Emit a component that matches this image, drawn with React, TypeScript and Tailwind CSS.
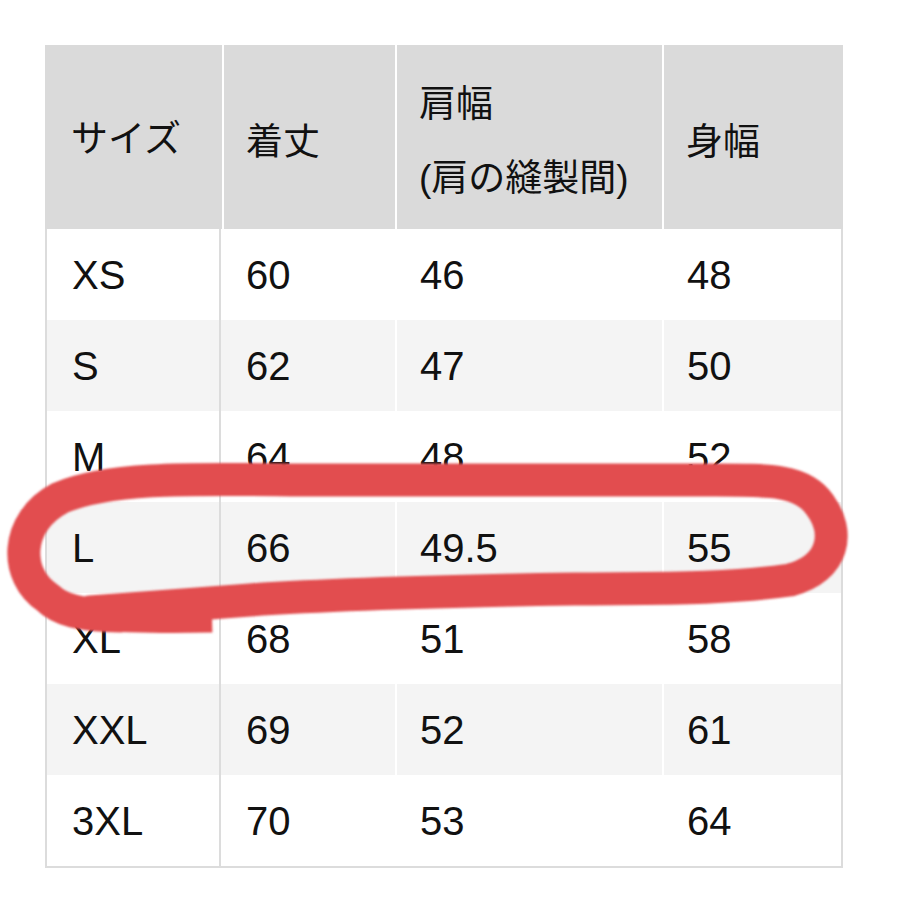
const rows = [
  ['XS', '60', '46', '48'],
  ['S', '62', '47', '50'],
  ['M', '64', '48', '52'],
  ['L', '66', '49.5', '55'],
  ['XL', '68', '51', '58'],
  ['XXL', '69', '52', '61'],
  ['3XL', '70', '53', '64'],
];

const font = { fontFamily: '"Liberation Sans", "Noto Sans CJK JP", Arial, sans-serif' };

export default function App() {
  return (
    <div className="relative w-[900px] h-[900px] bg-white text-[#111]" style={font}>
      <div className="pt-[45px] pl-[45px]">
        <div className="w-[798px]">
          {/* header */}
          <div className="grid grid-cols-[179px_173px_267px_179px] h-[184px] bg-[#dadada] text-[37px]">
            <div className="flex items-center pl-[26px] pt-[6px] border-r-2 border-white">サイズ</div>
            <div className="flex items-center pl-[22px] pt-[12px] border-r-2 border-white">着丈</div>
            <div className="flex flex-col justify-center pl-[22px] pt-[10px] leading-[74px] border-r-2 border-white">
              <span>肩幅</span>
              <span>(肩の縫製間)</span>
            </div>
            <div className="flex items-center pl-[22px] pt-[12px]">身幅</div>
          </div>

          {/* body */}
          <div className="border-x-2 border-b-2 border-[#dcdcdc]">
            {rows.map((r, i) => (
              <div
                key={r[0]}
                className={`grid grid-cols-[174px_176px_267px_177px] h-[91px] text-[40px] ${i % 2 === 1 ? 'bg-[#f4f4f4]' : 'bg-white'}`}
              >
                <div className="flex items-center pl-[25px] border-r-2 border-[#dcdcdc]">{r[0]}</div>
                <div className="flex items-center pl-[25px] border-r-2 border-white">{r[1]}</div>
                <div className="flex items-center pl-[23px] border-r-2 border-white">{r[2]}</div>
                <div className="flex items-center pl-[23px]">{r[3]}</div>
              </div>
            ))}
          </div>
        </div>
      </div>

      {/* hand-drawn red loop around L */}
      <svg className="absolute inset-0 pointer-events-none" width="900" height="900" viewBox="0 0 900 900">
        <defs>
          <filter id="soft" x="-5%" y="-20%" width="110%" height="140%">
            <feGaussianBlur stdDeviation="1.2" />
          </filter>
        </defs>
        <g filter="url(#soft)" fill="none" stroke="#e24e50" strokeWidth="33">
          <path d="M 212 616 C 170 617, 120 616, 90 613" strokeLinecap="butt" />
          <path
            d="M 120 616 C 80 615, 60 610, 48 598 C 14 576, 14 522, 60 498 C 110 476, 200 479, 300 480 L 700 480 C 765 480, 802 478, 820 505 C 840 532, 835 568, 790 580 C 720 590, 650 588, 574 589 C 450 591, 340 594, 250 600 C 180 605, 120 610, 90 612"
            strokeLinecap="round"
            strokeLinejoin="round"
          />
        </g>
      </svg>
    </div>
  );
}
